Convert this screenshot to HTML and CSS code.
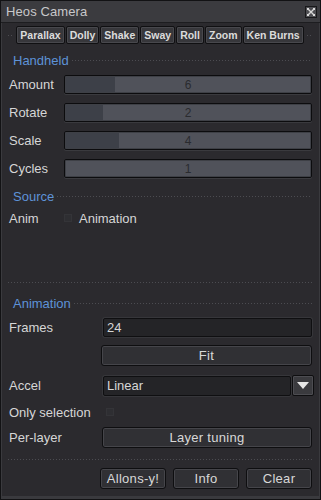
FILE: index.html
```html
<!DOCTYPE html>
<html>
<head>
<meta charset="utf-8">
<link rel="stylesheet" href="styles.css">
</head>
<body>
<div class="window">
  <div class="titlebar">
    <span class="title">Heos Camera</span>
    <span class="close">
      <svg width="10" height="10" viewBox="0 0 10 10"><path d="M2 2L8 8M8 2L2 8" stroke="#d8d8d8" stroke-width="1.4" fill="none"/><path d="M1 1h2v1H2v1H1zM9 1H7v1h1v1h1zM1 9h2V8H2V7H1zM9 9H7V8h1V7h1z" fill="#d8d8d8"/></svg>
    </span>
  </div>
  <div class="content">
    <div class="tabs">
      <span class="dash"></span>
      <div class="tabgroup">
        <span class="tab">Parallax</span>
        <span class="tab">Dolly</span>
        <span class="tab">Shake</span>
        <span class="tab">Sway</span>
        <span class="tab">Roll</span>
        <span class="tab">Zoom</span>
        <span class="tab">Ken Burns</span>
      </div>
      <span class="dash"></span>
    </div>

    <div class="head h-first"><span class="head-text">Handheld</span><span class="dash"></span></div>
    <div class="srow r-first"><span class="lbl">Amount</span><div class="slider"><div class="fill" style="width:19.8%"></div><span class="val">6</span></div></div>
    <div class="srow"><span class="lbl">Rotate</span><div class="slider"><div class="fill" style="width:14.9%"></div><span class="val">2</span></div></div>
    <div class="srow"><span class="lbl">Scale</span><div class="slider"><div class="fill" style="width:21.4%"></div><span class="val">4</span></div></div>
    <div class="srow"><span class="lbl">Cycles</span><div class="slider"><div class="fill" style="width:0%"></div><span class="val">1</span></div></div>

    <div class="head h-source"><span class="head-text">Source</span><span class="dash"></span></div>
    <div class="anim-row"><span class="lbl">Anim</span><span class="check"></span><span class="anim-text">Animation</span></div>

    <div class="sep sep-top"></div>
    <div class="head h-anim"><span class="head-text">Animation</span><span class="dash"></span></div>

    <div class="frow f-frames"><span class="lbl2">Frames</span><div class="input">24</div></div>
    <div class="frow f-fit"><span class="lbl2"></span><div class="btn">Fit</div></div>
    <div class="frow f-accel"><span class="lbl2">Accel</span><div class="select"><div class="input sel-in">Linear</div><div class="arrow"><svg width="12" height="7" viewBox="0 0 12 7"><path d="M0 0H12L6 7Z" fill="#e6e6e6"/></svg></div></div></div>
    <div class="frow f-only"><span class="lbl2">Only selection</span><span class="check"></span></div>
    <div class="frow f-layer"><span class="lbl2">Per-layer</span><div class="btn">Layer tuning</div></div>

    <div class="sep sep-bottom"></div>
    <div class="footer">
      <div class="btn fbtn">Allons-y!</div>
      <div class="btn fbtn">Info</div>
      <div class="btn fbtn">Clear</div>
    </div>
  </div>
</div>
</body>
</html>
```

FILE: styles.css
```css
html, body {
  margin: 0;
  padding: 0;
  background: #1c1c1e;
}
body {
  font-family: "Liberation Sans", Arial, sans-serif;
  font-size: 13px;
  color: #d6d6d6;
}
.window {
  width: 321px;
  height: 500px;
  box-sizing: border-box;
  background: #2b2a2e;
  border: 1px solid #121214;
  box-shadow: inset 1px 0 0 #3a3a3e, inset -1px 0 0 #3a3a3e, inset 0 -3px 0 #3a3a3e;
  display: flex;
  flex-direction: column;
}
.titlebar {
  height: 21px;
  background: #3b3b3f;
  border-bottom: 1px solid #1d1d20;
  display: flex;
  align-items: center;
  justify-content: space-between;
  padding: 0 3px 0 5px;
}
.title {
  font-size: 13px;
  letter-spacing: 0.1px;
  color: #c8c8ca;
}
.close {
  width: 12px;
  height: 12px;
  box-sizing: border-box;
  background: #4e4e52;
  border: 1px solid #18181a;
  display: flex;
  align-items: center;
  justify-content: center;
}
.content {
  padding: 0 8px 0 7px;
  display: flex;
  flex-direction: column;
}
.dash {
  flex: 1;
  height: 1px;
  background-image: linear-gradient(to right, #4c4c51 50%, transparent 50%);
  background-size: 3px 1px;
}
.tabs {
  margin-top: 3px;
  display: flex;
  align-items: center;
  gap: 3px;
}
.tabgroup {
  display: flex;
  gap: 1px;
}
.tab {
  height: 18px;
  box-sizing: border-box;
  padding: 0 3px;
  display: flex;
  align-items: center;
  justify-content: center;
  font-size: 10.5px;
  font-weight: bold;
  color: #dcdcdc;
  background: #37373b;
  border: 1px solid #101012;
  border-radius: 2px;
  box-shadow: inset 0 0 0 1px #48484d;
}
.head {
  height: 16px;
  display: flex;
  align-items: center;
  gap: 3px;
  padding-left: 5px;
}
.head-text {
  color: #5e93d8;
  font-size: 13px;
}
.h-first { margin-top: 8px; }
.h-source { margin-top: 10px; }
.h-anim { margin-top: 12px; }
.srow {
  display: flex;
  align-items: center;
  height: 19px;
  margin-top: 9px;
}
.srow.r-first { margin-top: 7px; }
.lbl {
  width: 55px;
  flex: none;
  padding-left: 1px;
}
.slider {
  flex: 1;
  height: 19px;
  box-sizing: border-box;
  border: 1px solid #0c0c0e;
  border-radius: 2px;
  background: #50525a;
  box-shadow: inset 0 0 0 1px #3e4046, 0 1px 0 #3a3a3e;
  position: relative;
  display: flex;
  align-items: center;
}
.fill {
  position: absolute;
  left: 1px;
  top: 1px;
  bottom: 1px;
  background: #3d4048;
}
.val {
  position: relative;
  flex: 1;
  text-align: center;
  font-size: 12px;
  color: #2a2b2f;
}
.anim-row {
  display: flex;
  align-items: center;
  height: 16px;
  margin-top: 6px;
}
.check {
  width: 8px;
  height: 8px;
  box-sizing: border-box;
  background: #2e2e32;
  border: 1px solid #343438;
  flex: none;
}
.anim-text { margin-left: 7px; }
.sep {
  height: 1px;
  background-image: linear-gradient(to right, #4c4c51 50%, transparent 50%);
  background-size: 3px 1px;
}
.sep-top { margin-top: 56px; }
.frow {
  display: flex;
  align-items: center;
}
.lbl2 {
  width: 93px;
  flex: none;
  padding-left: 1px;
}
.f-frames { margin-top: 7px; height: 19px; }
.f-fit { margin-top: 8px; height: 21px; }
.f-accel { margin-top: 9px; height: 21px; }
.f-only { margin-top: 9px; height: 14px; }
.f-only .check { margin-left: 4px; }
.f-layer { margin-top: 8px; height: 21px; }
.input {
  flex: 1;
  height: 19px;
  box-sizing: border-box;
  background: #242427;
  border: 1px solid #0f0f11;
  border-radius: 2px;
  box-shadow: 0 0 0 1px #36363a;
  display: flex;
  align-items: center;
  padding-left: 3px;
  margin-left: 1px;
  color: #d6d6d6;
}
.btn {
  flex: 1;
  height: 21px;
  box-sizing: border-box;
  background: #303034;
  border: 1px solid #0e0e10;
  border-radius: 3px;
  box-shadow: inset 0 0 0 1px #45454a;
  display: flex;
  align-items: center;
  justify-content: center;
  color: #d8d8d8;
  letter-spacing: 0.3px;
}
.f-fit .btn { margin-left: -1px; }
.select {
  flex: 1;
  display: flex;
  align-items: center;
  gap: 1px;
}
.sel-in { height: 20px; }
.arrow {
  width: 22px;
  height: 21px;
  box-sizing: border-box;
  background: #3a3a3e;
  border: 1px solid #0e0e10;
  border-radius: 2px;
  box-shadow: inset 0 0 0 1px #4c4c51;
  display: flex;
  align-items: center;
  justify-content: center;
  margin-right: -2px;
}
.sep-bottom { margin-top: 11px; }
.footer {
  margin-top: 8px;
  display: flex;
  gap: 7px;
  padding-left: 92px;
}
.fbtn { flex: 1; }
```
